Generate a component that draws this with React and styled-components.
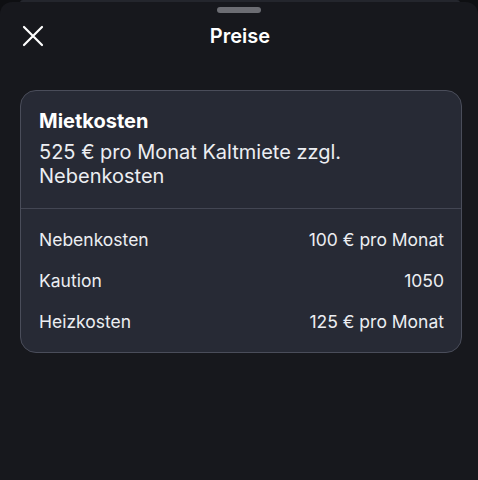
import React from 'react';
import styled, { createGlobalStyle } from 'styled-components';

const Global = createGlobalStyle`
  html, body {
    margin: 0;
    padding: 0;
    background: #0e0f12;
  }
  body {
    font-family: Inter, "Noto Sans", sans-serif;
    color: #f4f5f7;
  }
`;

const Screen = styled.div`
  width: 478px;
  height: 480px;
  overflow: hidden;
  background: #0e0f12;
  padding-top: 2px;
  box-sizing: border-box;
  position: relative;
`;

const BackEdge = styled.div`
  position: absolute;
  top: 0;
  left: 20px;
  right: 18px;
  height: 3px;
  background: #24262d;
  border-radius: 10px 10px 0 0;
`;

const Sheet = styled.div`
  position: relative;
  height: 100%;
  background: #17181d;
  border-radius: 12px 12px 0 0;
  display: flex;
  flex-direction: column;
  align-items: stretch;
`;

const Handle = styled.div`
  width: 44px;
  height: 6px;
  border-radius: 3px;
  background: #6c6d73;
  margin: 5px auto 0;
`;

const Header = styled.div`
  height: 46px;
  display: grid;
  grid-template-columns: 60px 1fr 60px;
  align-items: center;
`;

const CloseButton = styled.button`
  background: none;
  border: none;
  padding: 0 0 0 22px;
  display: flex;
  align-items: center;
  cursor: pointer;
`;

const Title = styled.h1`
  margin: 0;
  padding-left: 2px;
  text-align: center;
  font-size: 20px;
  font-weight: 600;
  color: #ffffff;
`;

const Card = styled.section`
  margin: 31px 16px 0 20px;
  background: #272a35;
  border: 1px solid #4a4d5a;
  border-radius: 16px;
  overflow: hidden;
`;

const Top = styled.div`
  padding: 18px 18px 20px;
  border-bottom: 1px solid #434653;
`;

const CardTitle = styled.h2`
  margin: 0 0 7px;
  font-size: 20px;
  line-height: 24px;
  font-weight: 700;
  color: #ffffff;
`;

const Description = styled.p`
  margin: 0;
  font-size: 20px;
  line-height: 24px;
  color: #eceef2;
  max-width: 340px;
`;

const List = styled.div`
  padding: 10px 17px 10px 18px;
  display: flex;
  flex-direction: column;
`;

const Row = styled.div`
  height: 41px;
  display: flex;
  justify-content: space-between;
  align-items: center;
  font-size: 17.5px;
  color: #eceef2;
`;

const rows = [
  ['Nebenkosten', '100 € pro Monat'],
  ['Kaution', '1050'],
  ['Heizkosten', '125 € pro Monat'],
];

export default function App() {
  return (
    <>
      <Global />
      <Screen>
        <BackEdge />
        <Sheet>
          <Handle />
          <Header>
            <CloseButton aria-label="Schließen">
              <svg width="22" height="22" viewBox="0 0 22 22">
                <path d="M2 2 L20 20 M20 2 L2 20" stroke="#ffffff" strokeWidth="2.2" strokeLinecap="round" />
              </svg>
            </CloseButton>
            <Title>Preise</Title>
            <span />
          </Header>
          <Card>
            <Top>
              <CardTitle>Mietkosten</CardTitle>
              <Description>525 € pro Monat Kaltmiete zzgl. Nebenkosten</Description>
            </Top>
            <List>
              {rows.map(([label, value]) => (
                <Row key={label}>
                  <span>{label}</span>
                  <span>{value}</span>
                </Row>
              ))}
            </List>
          </Card>
        </Sheet>
      </Screen>
    </>
  );
}
